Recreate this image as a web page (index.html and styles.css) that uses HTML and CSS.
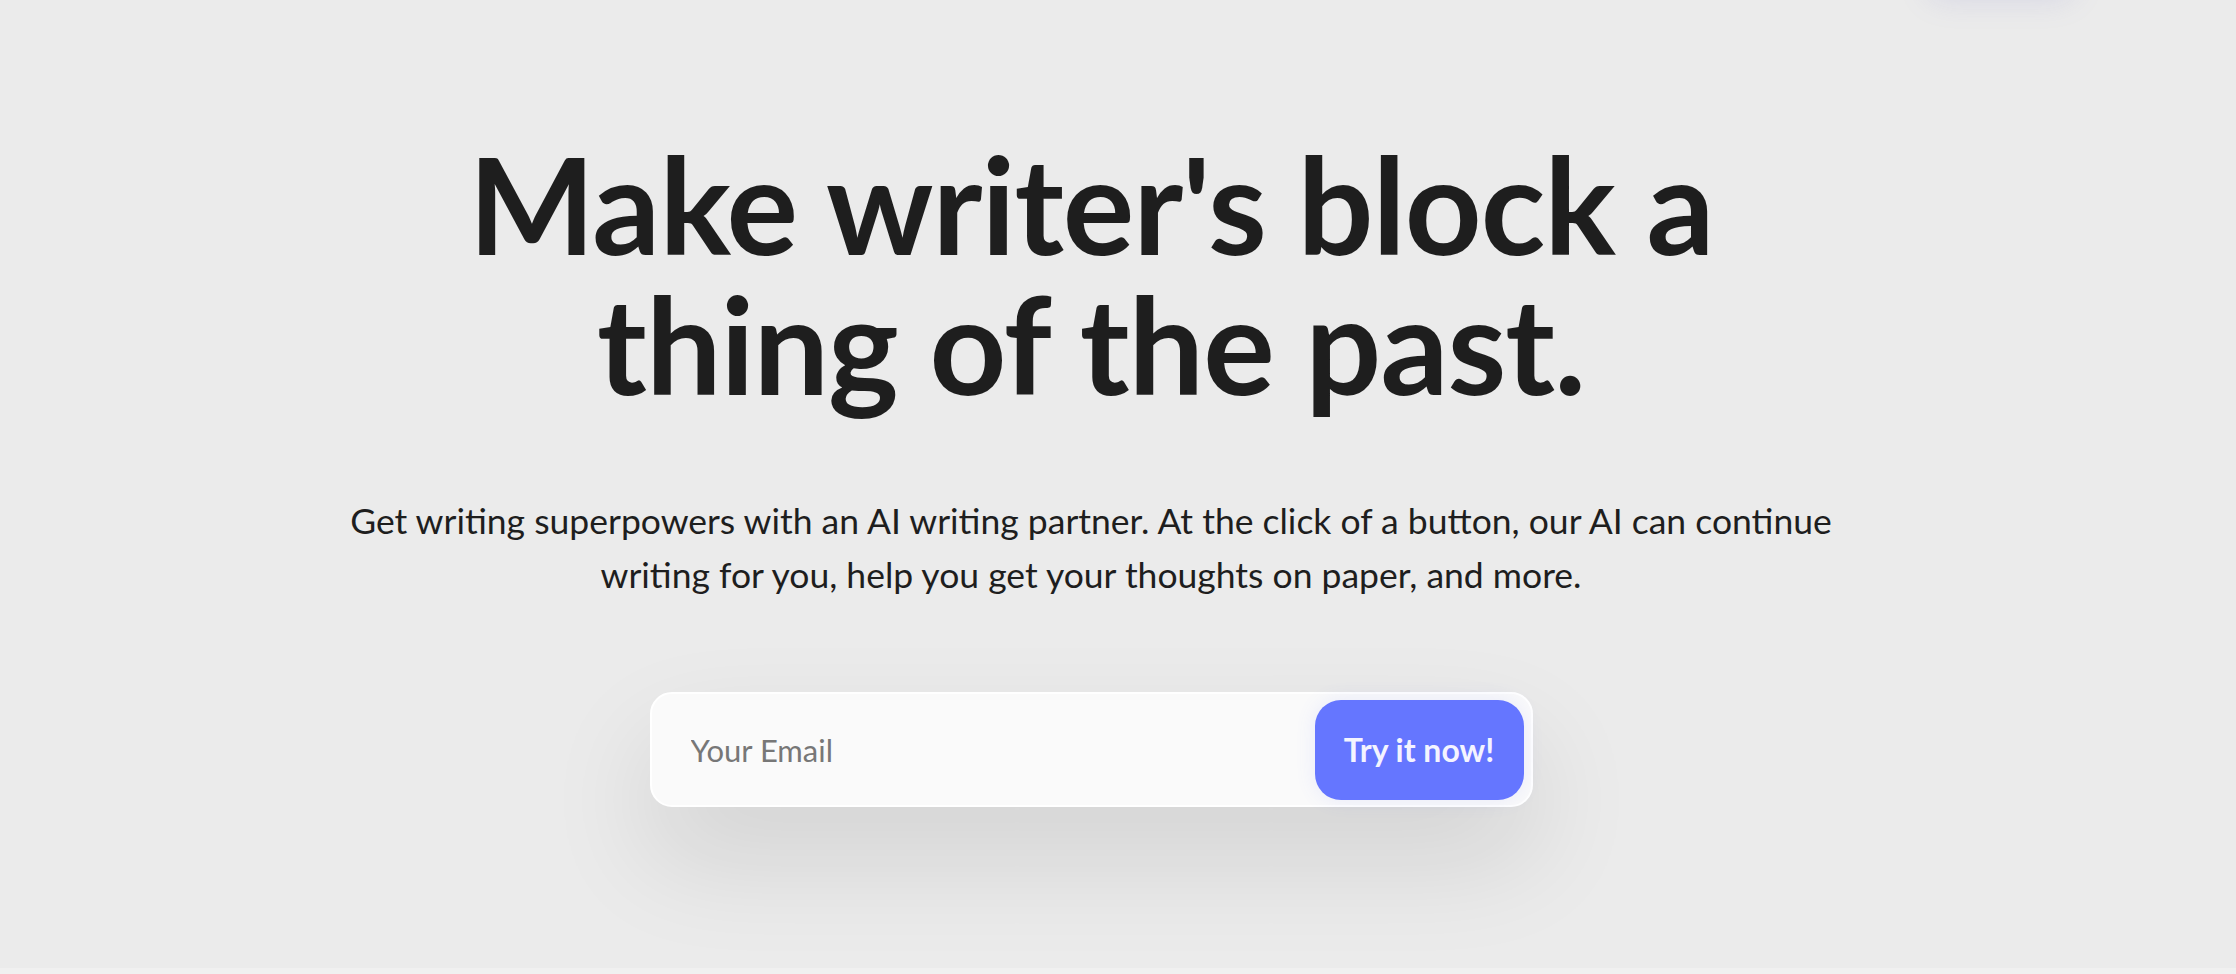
FILE: index.html
```html
<!DOCTYPE html>
<html lang="en">
<head>
  <meta charset="UTF-8">
  <meta name="viewport" content="width=device-width, initial-scale=1.0">
  <title>Make writer's block a thing of the past</title>
  <link rel="stylesheet" href="styles.css">
</head>
<body>

  <div class="corner-glow"></div>

  <section class="hero">
    <h1>Make writer's block a<br>thing of the past.</h1>
    <p class="lead">Get writing superpowers with an AI writing partner. At the click of a button, our AI can continue writing for you, help you get your thoughts on paper, and more.</p>

    <form class="signup" onsubmit="return false;">
      <input type="email" placeholder="Your Email">
      <button type="submit">Try it now!</button>
    </form>
  </section>

  <section class="next"></section>

</body>
</html>
```

FILE: styles.css
```css
body {
  font-family: Lato, "Open Sans", sans-serif;
  margin: 0;
  padding: 0;
  background-color: #ebebeb;
  color: #1e1e1e;
  overflow: hidden;
}
.corner-glow {
  position: absolute;
  top: -50px;
  right: 160px;
  width: 150px;
  height: 40px;
  border-radius: 20px;
  box-shadow: 0 10px 30px rgba(120, 120, 200, 0.18);
}
.hero {
  height: 968px;
  box-sizing: border-box;
  padding: 134px 54px 0 0;
  display: flex;
  flex-direction: column;
  align-items: center;
  text-align: center;
}
h1 {
  margin: 0;
  font-size: 134px;
  line-height: 140px;
  font-weight: 700;
  letter-spacing: -1px;
}
.lead {
  margin: 80px 0 0;
  font-size: 35.5px;
  line-height: 54px;
  max-width: 1520px;
}
.signup {
  margin-top: 90px;
  width: 883px;
  height: 115px;
  box-sizing: border-box;
  display: flex;
  align-items: center;
  padding: 7px;
  background: #fafafa;
  border: 2px solid #ffffff;
  border-radius: 22px;
  box-shadow: 0 50px 110px rgba(0, 0, 0, 0.11);
}
.signup input {
  flex: 1;
  border: none;
  background: transparent;
  font-family: inherit;
  font-size: 31px;
  color: #333;
  padding: 0 0 0 32px;
  outline: none;
}
.signup input::placeholder {
  color: #777;
}
.signup button {
  width: 209px;
  height: 100px;
  border: none;
  border-radius: 26px;
  background-color: #6576ff;
  color: #f4f4ff;
  font-family: inherit;
  font-size: 32px;
  font-weight: 700;
  cursor: pointer;
  box-shadow: 0 0 20px rgba(101, 118, 255, 0.12);
}
.next {
  height: 60px;
  background: #f0f0f0;
}
```
